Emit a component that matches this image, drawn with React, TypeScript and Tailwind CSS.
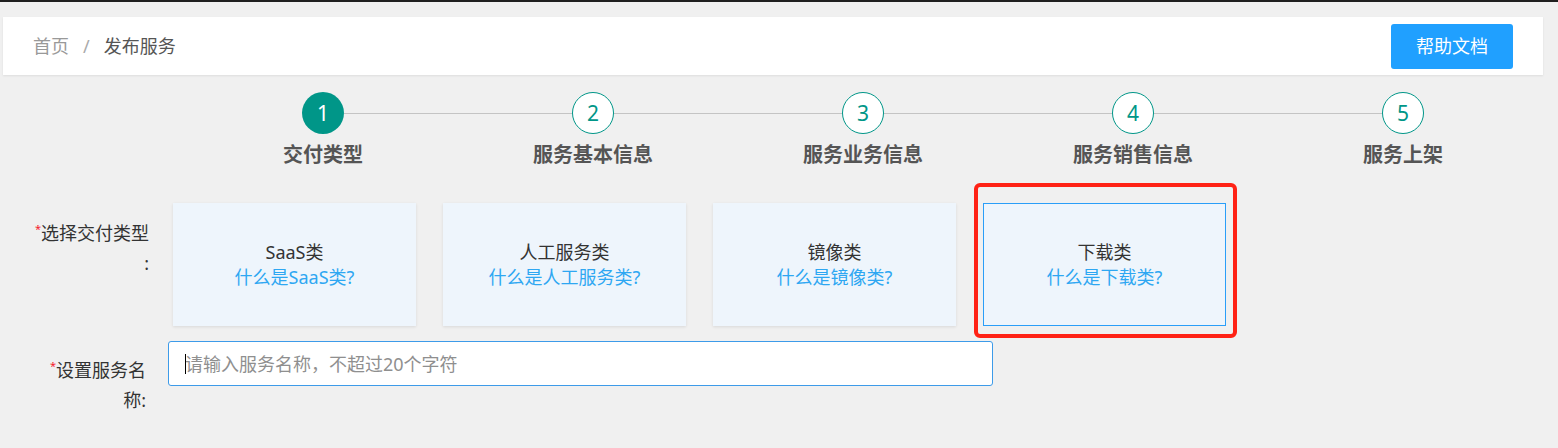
import React from "react";

const steps = ["交付类型", "服务基本信息", "服务业务信息", "服务销售信息", "服务上架"];

const types = [
  { name: "SaaS类", tip: "什么是SaaS类?" },
  { name: "人工服务类", tip: "什么是人工服务类?" },
  { name: "镜像类", tip: "什么是镜像类?" },
  { name: "下载类", tip: "什么是下载类?" },
];

export default function App() {
  const selected = 3;

  return (
    <div
      className="min-h-[448px] bg-[#f0f0f0] text-[#333]"
      style={{ fontFamily: '"Noto Sans", "Noto Sans CJK SC", sans-serif' }}
    >
      {/* top dark edge */}
      <div className="h-[2px] bg-[#1f1f1f]" />

      {/* HEADER */}
      <div className="pt-[15px] pl-[3px]">
        <div className="w-[1540px] h-[58px] bg-white shadow-[0_1px_2px_rgba(0,0,0,0.08)] flex items-center justify-between pl-[30px] pr-[30px]">
          <div className="flex items-center text-[18px] leading-none">
            <span className="text-[#999]">首页</span>
            <span className="text-[#aaa] px-[14px]">/</span>
            <span className="text-[#555]">发布服务</span>
          </div>
          <button className="w-[122px] h-[45px] rounded-[3px] bg-[#20a0ff] text-white text-[18px]">
            帮助文档
          </button>
        </div>
      </div>

      {/* STEPS */}
      <div className="flex pl-[188px] mt-[17px]">
        {steps.map((s, i) => (
          <div key={s} className="w-[270px] flex flex-col items-center">
            <div className="w-full flex items-center">
              <div className={`flex-1 h-px ${i === 0 ? "" : "bg-[#c4c4c4]"}`} />
              <div
                className={`w-[42px] h-[42px] rounded-full flex items-center justify-center text-[21px] leading-none ${
                  i === 0
                    ? "bg-[#009688] text-white"
                    : "bg-white border border-[#009688] text-[#009688]"
                }`}
              >
                {i + 1}
              </div>
              <div className={`flex-1 h-px ${i === steps.length - 1 ? "" : "bg-[#c4c4c4]"}`} />
            </div>
            <div className="mt-[7px] text-[20px] leading-[28px] font-bold text-[#555]">{s}</div>
          </div>
        ))}
      </div>

      {/* DELIVERY TYPE */}
      <div className="flex mt-[34px]">
        <div className="w-[168px] pr-[19px] pt-[15px] text-right text-[18px] leading-[30px] text-[#333] shrink-0">
          <span className="text-[#f5222d] text-[11px] align-top leading-[22px]">*</span>
          选择交付类型
          <br />:
        </div>
        <div className="flex gap-[27px] ml-[5px]">
          {types.map((t, i) => (
            <div
              key={t.name}
              className={`relative w-[243px] h-[123px] ${
                i === selected
                  ? "bg-[#2a9ef8] p-px"
                  : "shadow-[0_1px_3px_rgba(0,0,0,0.1)]"
              }`}
            >
              <div className="w-full h-full bg-[#eef5fc] text-[#333] flex flex-col items-center justify-center text-[18px] leading-[25px]">
                <span>{t.name}</span>
                <span className="text-[#2ea7f2]">{t.tip}</span>
              </div>
              {i === selected && (
                <div className="absolute -left-[9px] -top-[20px] -right-[11px] -bottom-[12px] border-[4px] border-[#ff2215] rounded-[6px] pointer-events-none" />
              )}
            </div>
          ))}
        </div>
      </div>

      {/* SERVICE NAME */}
      <div className="flex mt-[15px]">
        <div className="w-[168px] pr-[22px] pt-[14px] text-right text-[18px] leading-[30px] text-[#333] shrink-0">
          <span className="text-[#f5222d] text-[11px] align-top leading-[22px]">*</span>
          设置服务名
          <br />
          称:
        </div>
        <div className="relative">
          <input
            type="text"
            placeholder="请输入服务名称，不超过20个字符"
            className="w-[825px] h-[45px] rounded-[3px] border border-[#3d9be9] bg-white pl-[16px] text-[18px] outline-none placeholder:text-[#8f8f8f]"
          />
          <span className="absolute left-[17px] top-[13px] w-px h-[20px] bg-black" />
        </div>
      </div>
    </div>
  );
}
